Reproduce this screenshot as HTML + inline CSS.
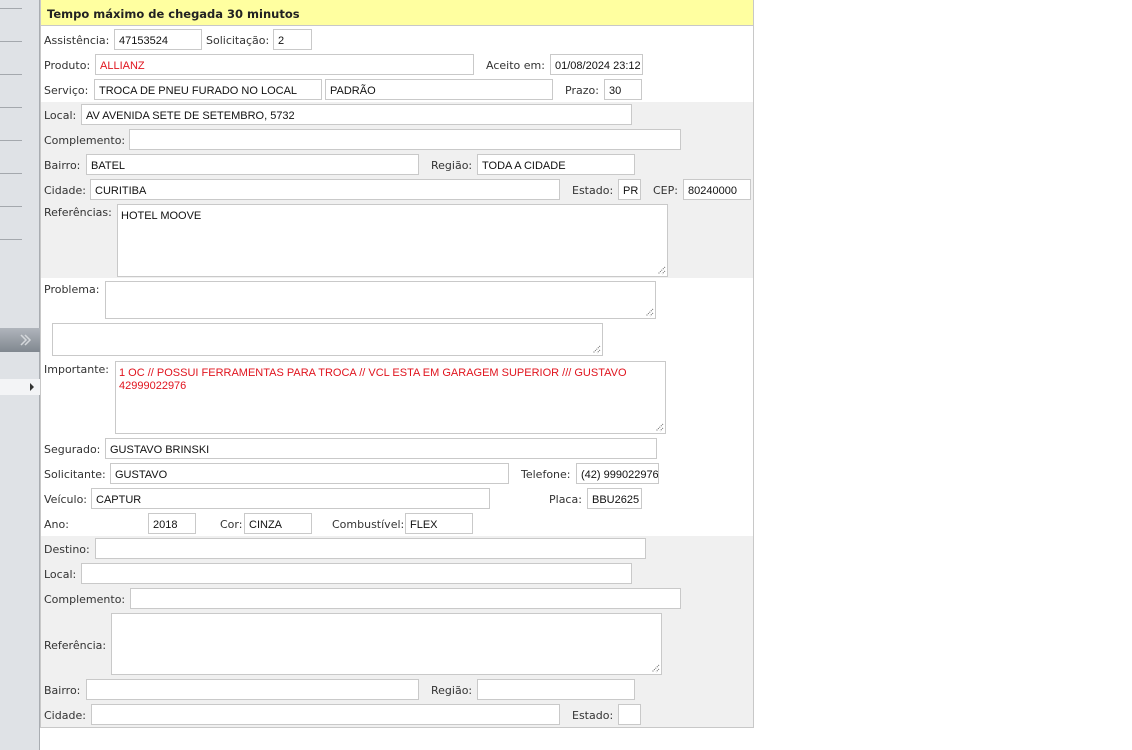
<!DOCTYPE html>
<html><head><meta charset="utf-8"><style>
*{margin:0;padding:0;box-sizing:border-box}
body{width:1132px;height:750px;background:#fff;position:relative;overflow:hidden;font-family:"DejaVu Sans","Liberation Sans",sans-serif}
.sb{position:absolute;left:0;top:0;width:40px;height:750px;background:#dfe2e6;border-right:1px solid #a9adb2}
.ln{position:absolute;left:0;width:22px;height:1px;background:#a4a8ad}
.panel{position:absolute;left:40px;top:0;width:714px;height:728px;border:1px solid #c8c8c8;border-top:none;background:#fff}
.hd{position:absolute;left:41px;top:0;width:712px;height:26px;background:#ffffa0;border-bottom:1px solid #c8c8c8;font-weight:bold;font-size:11.5px;color:#222;padding:7px 0 0 6px;font-family:"DejaVu Sans",sans-serif}
.g{position:absolute;left:41px;width:712px;background:#f0f0f0}
.l{position:absolute;font-size:11px;color:#333;line-height:14px;white-space:nowrap;margin-top:1px}
.i{position:absolute;height:21px;border:1px solid #c9c9c9;background:#fff;font-family:"Liberation Sans",sans-serif;font-size:11px;color:#111;padding:4px 0 0 4px;line-height:14px;white-space:nowrap;overflow:hidden}
.r{color:#e0141e}
.t{position:absolute;border:1px solid #c9c9c9;background:#fff;font-family:"Liberation Sans",sans-serif;font-size:11px;color:#111;padding:5px 0 0 3px;line-height:13px}
.t svg{position:absolute;right:1px;bottom:1px}
</style></head><body>
<div class="sb">
<div class="ln" style="top:8px"></div><div class="ln" style="top:41px"></div><div class="ln" style="top:74px"></div><div class="ln" style="top:107px"></div><div class="ln" style="top:140px"></div><div class="ln" style="top:173px"></div><div class="ln" style="top:206px"></div><div class="ln" style="top:239px"></div>
<div style="position:absolute;left:0;top:328px;width:40px;height:24px;background:linear-gradient(#b0b5bc,#80878f)"><svg width="40" height="24" style="position:absolute;left:0;top:0"><path d="M21 7l5 5-5 5M25 7l5 5-5 5" stroke="#d4d7db" stroke-width="1.5" fill="none"/></svg></div>
<div style="position:absolute;left:0;top:379px;width:40px;height:16px;background:#f3f4f6"><svg width="40" height="16" style="position:absolute;left:0;top:0"><path d="M30 4l4 4-4 4z" fill="#333"/></svg></div>
</div>
<div class="panel"></div>
<div class="hd">Tempo máximo de chegada 30 minutos</div>
<div class="g" style="top:102px;height:176px"></div>
<div class="g" style="top:536px;height:191px"></div>

<div class="l" style="left:44px;top:33px">Assistência:</div><div class="i" style="left:114px;top:29px;width:88px">47153524</div>
<div class="l" style="left:206px;top:33px">Solicitação:</div><div class="i" style="left:273px;top:29px;width:39px">2</div>

<div class="l" style="left:44px;top:58px">Produto:</div><div class="i r" style="left:95px;top:54px;width:379px">ALLIANZ</div>
<div class="l" style="left:486px;top:58px">Aceito em:</div><div class="i" style="left:550px;top:54px;width:93px">01/08/2024 23:12</div>

<div class="l" style="left:44px;top:83px">Serviço:</div><div class="i" style="left:94px;top:79px;width:228px">TROCA DE PNEU FURADO NO LOCAL</div>
<div class="i" style="left:325px;top:79px;width:228px">PADRÃO</div>
<div class="l" style="left:565px;top:83px">Prazo:</div><div class="i" style="left:604px;top:79px;width:38px">30</div>

<div class="l" style="left:44px;top:108px">Local:</div><div class="i" style="left:81px;top:104px;width:551px">AV AVENIDA SETE DE SETEMBRO, 5732</div>
<div class="l" style="left:44px;top:133px">Complemento:</div><div class="i" style="left:129px;top:129px;width:552px"></div>
<div class="l" style="left:44px;top:158px">Bairro:</div><div class="i" style="left:86px;top:154px;width:333px">BATEL</div>
<div class="l" style="left:431px;top:158px">Região:</div><div class="i" style="left:477px;top:154px;width:158px">TODA A CIDADE</div>
<div class="l" style="left:44px;top:183px">Cidade:</div><div class="i" style="left:90px;top:179px;width:470px">CURITIBA</div>
<div class="l" style="left:572px;top:183px">Estado:</div><div class="i" style="left:618px;top:179px;width:23px">PR</div>
<div class="l" style="left:653px;top:183px">CEP:</div><div class="i" style="left:683px;top:179px;width:68px">80240000</div>
<div class="l" style="left:44px;top:205px">Referências:</div>
<div class="t" style="left:117px;top:204px;width:551px;height:73px">HOTEL MOOVE<svg width="9" height="9"><path d="M8 1L1 8M8 5L5 8" stroke="#666" stroke-dasharray="1 1"/></svg></div>

<div class="l" style="left:44px;top:282px">Problema:</div>
<div class="t" style="left:105px;top:281px;width:551px;height:38px"><svg width="9" height="9"><path d="M8 1L1 8M8 5L5 8" stroke="#666" stroke-dasharray="1 1"/></svg></div>
<div class="t" style="left:52px;top:323px;width:551px;height:33px"><svg width="9" height="9"><path d="M8 1L1 8M8 5L5 8" stroke="#666" stroke-dasharray="1 1"/></svg></div>
<div class="l" style="left:44px;top:362px">Importante:</div>
<div class="t r" style="left:115px;top:361px;width:551px;height:73px;color:#e0141e">1 OC // POSSUI FERRAMENTAS PARA TROCA // VCL ESTA EM GARAGEM SUPERIOR /// GUSTAVO<br>42999022976<svg width="9" height="9"><path d="M8 1L1 8M8 5L5 8" stroke="#666" stroke-dasharray="1 1"/></svg></div>

<div class="l" style="left:44px;top:442px">Segurado:</div><div class="i" style="left:105px;top:438px;width:552px">GUSTAVO BRINSKI</div>
<div class="l" style="left:44px;top:467px">Solicitante:</div><div class="i" style="left:110px;top:463px;width:399px">GUSTAVO</div>
<div class="l" style="left:521px;top:467px">Telefone:</div><div class="i" style="left:576px;top:463px;width:83px">(42) 999022976</div>
<div class="l" style="left:44px;top:492px">Veículo:</div><div class="i" style="left:91px;top:488px;width:399px">CAPTUR</div>
<div class="l" style="left:549px;top:492px">Placa:</div><div class="i" style="left:587px;top:488px;width:55px">BBU2625</div>
<div class="l" style="left:44px;top:517px">Ano:</div><div class="i" style="left:148px;top:513px;width:48px">2018</div>
<div class="l" style="left:220px;top:517px">Cor:</div><div class="i" style="left:244px;top:513px;width:68px">CINZA</div>
<div class="l" style="left:332px;top:517px">Combustível:</div><div class="i" style="left:405px;top:513px;width:68px">FLEX</div>

<div class="l" style="left:44px;top:542px">Destino:</div><div class="i" style="left:95px;top:538px;width:551px"></div>
<div class="l" style="left:44px;top:567px">Local:</div><div class="i" style="left:81px;top:563px;width:551px"></div>
<div class="l" style="left:44px;top:592px">Complemento:</div><div class="i" style="left:130px;top:588px;width:551px"></div>
<div class="l" style="left:44px;top:638px">Referência:</div>
<div class="t" style="left:111px;top:613px;width:551px;height:62px"><svg width="9" height="9"><path d="M8 1L1 8M8 5L5 8" stroke="#666" stroke-dasharray="1 1"/></svg></div>
<div class="l" style="left:44px;top:683px">Bairro:</div><div class="i" style="left:86px;top:679px;width:333px"></div>
<div class="l" style="left:431px;top:683px">Região:</div><div class="i" style="left:477px;top:679px;width:158px"></div>
<div class="l" style="left:44px;top:708px">Cidade:</div><div class="i" style="left:91px;top:704px;width:469px"></div>
<div class="l" style="left:572px;top:708px">Estado:</div><div class="i" style="left:618px;top:704px;width:23px"></div>
</body></html>
